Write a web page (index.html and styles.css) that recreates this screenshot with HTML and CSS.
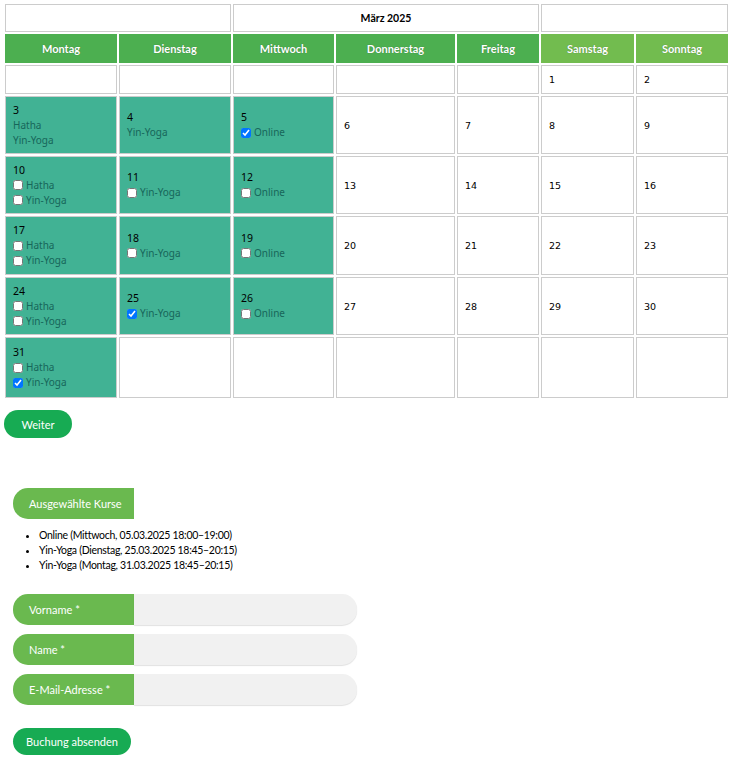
FILE: index.html
```html
<!DOCTYPE html>
<html lang="de">
<head>
<meta charset="utf-8">
<title>Kalender</title>
<link rel="stylesheet" href="styles.css">
</head>
<body>
<div class="page">
  <table class="cal">
    <colgroup>
      <col class="c1"><col class="c2"><col class="c3"><col class="c4"><col class="c5"><col class="c6"><col class="c7">
    </colgroup>
    <tr class="title-row">
      <td colspan="2"></td>
      <td colspan="3" class="month">März 2025</td>
      <td colspan="2"></td>
    </tr>
    <tr class="head-row">
      <th>Montag</th><th>Dienstag</th><th>Mittwoch</th><th>Donnerstag</th><th>Freitag</th><th class="we">Samstag</th><th class="we">Sonntag</th>
    </tr>
    <tr class="short">
      <td></td><td></td><td></td><td></td><td></td><td class="num">1</td><td class="num">2</td>
    </tr>
    <tr class="wk">
      <td class="act"><div class="d">3</div><div class="k">Hatha</div><div class="k">Yin-Yoga</div></td>
      <td class="act"><div class="d">4</div><div class="k">Yin-Yoga</div></td>
      <td class="act"><div class="d">5</div><label class="k"><input type="checkbox" checked> Online</label></td>
      <td class="num">6</td><td class="num">7</td><td class="num">8</td><td class="num">9</td>
    </tr>
    <tr class="wk">
      <td class="act"><div class="d">10</div><label class="k"><input type="checkbox"> Hatha</label><label class="k"><input type="checkbox"> Yin-Yoga</label></td>
      <td class="act"><div class="d">11</div><label class="k"><input type="checkbox"> Yin-Yoga</label></td>
      <td class="act"><div class="d">12</div><label class="k"><input type="checkbox"> Online</label></td>
      <td class="num">13</td><td class="num">14</td><td class="num">15</td><td class="num">16</td>
    </tr>
    <tr class="wk wk-tall">
      <td class="act"><div class="d">17</div><label class="k"><input type="checkbox"> Hatha</label><label class="k"><input type="checkbox"> Yin-Yoga</label></td>
      <td class="act"><div class="d">18</div><label class="k"><input type="checkbox"> Yin-Yoga</label></td>
      <td class="act"><div class="d">19</div><label class="k"><input type="checkbox"> Online</label></td>
      <td class="num">20</td><td class="num">21</td><td class="num">22</td><td class="num">23</td>
    </tr>
    <tr class="wk">
      <td class="act"><div class="d">24</div><label class="k"><input type="checkbox"> Hatha</label><label class="k"><input type="checkbox"> Yin-Yoga</label></td>
      <td class="act"><div class="d">25</div><label class="k"><input type="checkbox" checked> Yin-Yoga</label></td>
      <td class="act"><div class="d">26</div><label class="k"><input type="checkbox"> Online</label></td>
      <td class="num">27</td><td class="num">28</td><td class="num">29</td><td class="num">30</td>
    </tr>
    <tr class="wk wk-last">
      <td class="act"><div class="d">31</div><label class="k"><input type="checkbox"> Hatha</label><label class="k"><input type="checkbox" checked> Yin-Yoga</label></td>
      <td></td><td></td><td></td><td></td><td></td><td></td>
    </tr>
  </table>

  <button class="btn weiter" type="button">Weiter</button>

  <section class="booking">
    <div class="tag">Ausgewählte Kurse</div>
    <ul class="list">
      <li>Online (Mittwoch, 05.03.2025 18:00–19:00)</li>
      <li>Yin-Yoga (Dienstag, 25.03.2025 18:45–20:15)</li>
      <li>Yin-Yoga (Montag, 31.03.2025 18:45–20:15)</li>
    </ul>
    <div class="field"><span class="flabel">Vorname *</span><input class="finput" type="text"></div>
    <div class="field"><span class="flabel">Name *</span><input class="finput" type="text"></div>
    <div class="field"><span class="flabel">E-Mail-Adresse *</span><input class="finput" type="email"></div>
    <button class="btn submit" type="button">Buchung absenden</button>
  </section>
</div>
</body>
</html>
```

FILE: styles.css
```css
html, body {
  margin: 0;
  padding: 0;
  background: #fff;
}
body {
  font-family: "Lato", "Noto Sans", sans-serif;
  font-size: 11px;
  color: #000;
}
.page {
  padding: 2px 2px 2px 3px;
}
.cal {
  width: 727px;
  table-layout: fixed;
  border-collapse: separate;
  border-spacing: 2px;
}
.c1 { width: 112px; }
.c2 { width: 112px; }
.c3 { width: 101px; }
.c4 { width: 119px; }
.c5 { width: 82px; }
.c6 { width: 93px; }
.c7 { width: 92px; }

.cal td {
  border: 1px solid #cccccc;
  padding: 6px 7px;
  vertical-align: middle;
  box-sizing: border-box;
}
.title-row td { height: 28px; padding-top: 0; padding-bottom: 0; }
.month {
  font-weight: bold;
  text-align: center;
  font-size: 10.5px;
}
.cal th {
  background: #4caf50;
  border: 1px solid #4caf50;
  color: #fff;
  font-weight: bold;
  font-size: 11px;
  height: 29px;
  padding: 0 4px;
  text-shadow: 0 0 1px rgba(0,0,0,0.35);
  box-sizing: border-box;
}
.cal th.we {
  background: #72bc4f;
  border-color: #72bc4f;
}
.short td { height: 29px; padding-top: 0; padding-bottom: 0; }
.wk td { height: 58px; }
.wk-tall td { height: 59px; }
.wk-last td { height: 61px; }

.num {
  font-family: "DejaVu Sans", "Verdana", sans-serif;
  font-size: 9.5px;
}
.cal td.act {
  background: #41b294;
  padding: 4px 7px;
}
.d {
  font-family: "Noto Sans", sans-serif;
  font-size: 10.5px;
  line-height: 15px;
  color: #000;
}
.k {
  display: flex;
  align-items: center;
  gap: 3px;
  font-family: "Noto Sans", sans-serif;
  font-size: 10px;
  line-height: 15px;
  color: #17665a;
}
.k input {
  margin: 0;
  width: 10px;
  height: 10px;
}

.btn {
  display: block;
  border: 0;
  border-radius: 14px;
  background: #17ab53;
  color: #fff;
  font-family: "Lato", "Noto Sans", sans-serif;
  font-size: 11px;
  height: 28px;
  cursor: pointer;
}
.weiter {
  margin: 10px 0 0 1px;
  width: 68px;
}
.booking {
  padding: 50px 0 0 10px;
}
.tag {
  width: 121px;
  height: 31px;
  box-sizing: border-box;
  padding-left: 16px;
  display: flex;
  align-items: center;
  background: #6ab94f;
  color: #fff;
  border-radius: 15px 0 0 15px;
  font-size: 11px;
}
.list {
  margin: 9px 0 21px 0;
  padding-left: 26px;
  line-height: 15px;
  font-size: 10.5px;
  letter-spacing: -0.3px;
}
.field {
  display: flex;
  width: 344px;
  height: 31px;
  margin-bottom: 9px;
}
.flabel {
  width: 121px;
  box-sizing: border-box;
  padding-left: 16px;
  display: flex;
  align-items: center;
  background: #6ab94f;
  color: #fff;
  border-radius: 15px 0 0 15px;
  font-size: 11px;
}
.finput {
  flex: 1;
  border: 0;
  margin: 0;
  background: #f1f1f1;
  border-radius: 0 15px 15px 0;
  box-shadow: 0 1px 1px rgba(0,0,0,0.12);
  outline: none;
}
.submit {
  margin-top: 23px;
  width: 118px;
  height: 27px;
}
```
